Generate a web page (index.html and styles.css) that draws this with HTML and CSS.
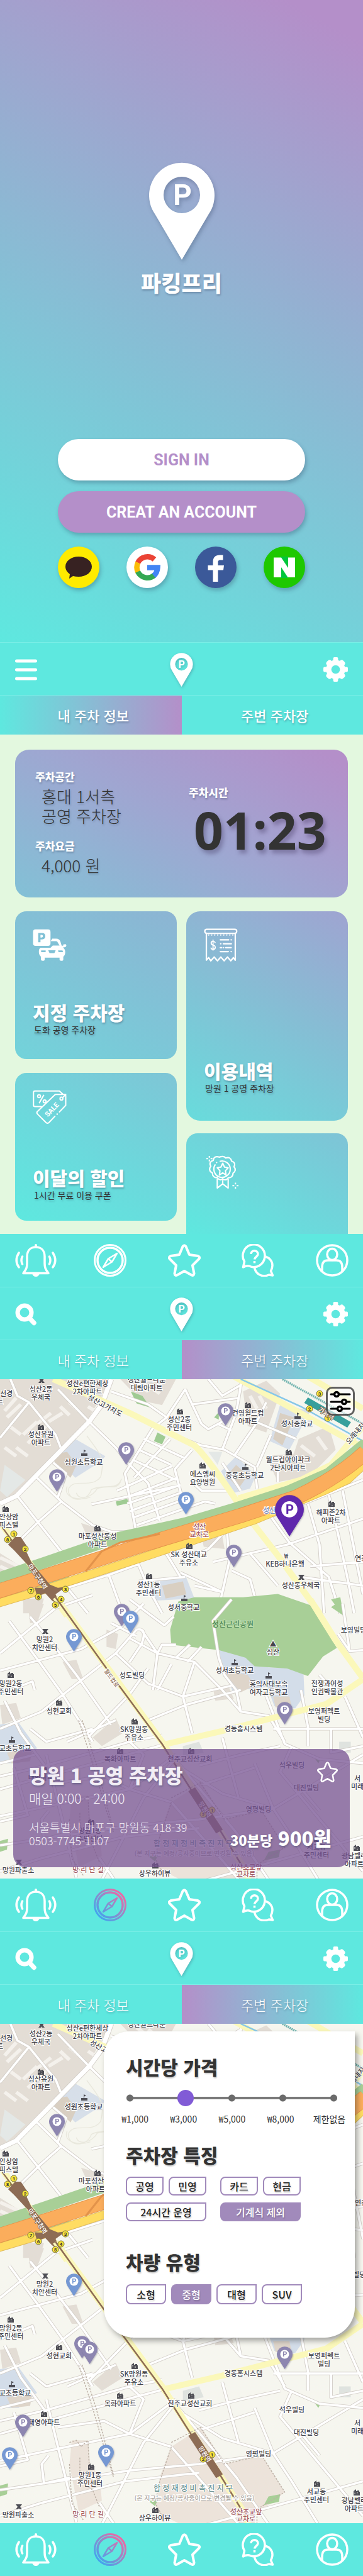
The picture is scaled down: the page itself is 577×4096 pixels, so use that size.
FILE: index.html
```html
<!DOCTYPE html>
<html lang="ko">
<head>
<meta charset="utf-8">
<meta name="viewport" content="width=device-width, initial-scale=1">
<title>파킹프리</title>
<link rel="stylesheet" href="styles.css">
</head>
<body>
<svg class="defs" aria-hidden="true">
  <defs>
    <linearGradient id="active" gradientUnits="userSpaceOnUse" x1="6" y1="46" x2="46" y2="6">
      <stop offset="0" stop-color="#3ba6f2"/><stop offset=".5" stop-color="#8e8bcb"/><stop offset="1" stop-color="#fb62a0"/>
    </linearGradient>
    <symbol id="logo" viewBox="0 0 104 155">
      <path fill="#fff" fill-rule="evenodd" d="M52 155 9 82A52 52 0 1 1 95 82ZM52 23a29 29 0 1 0 0 58a29 29 0 0 0 0-58Z"/>
      <text class="pin-p" fill="#fff" x="53" y="68">P</text>
    </symbol>
    <symbol id="pin" viewBox="0 0 104 150">
      <path fill="currentColor" d="M52 150 9 82A52 52 0 1 1 95 82Z"/>
      <circle cx="52" cy="52" r="29" fill="#fff"/>
      <text class="pin-p" fill="currentColor" x="53" y="68">P</text>
    </symbol>
    <symbol id="gear" viewBox="0 0 40 40">
      <g fill="#fff"><rect x="16" y="0" width="8" height="40" rx="2"/><rect x="16" y="0" width="8" height="40" rx="2" transform="rotate(90 20 20)"/><rect x="15" y="1" width="10" height="38" rx="4" transform="rotate(45 20 20)"/><rect x="15" y="1" width="10" height="38" rx="4" transform="rotate(-45 20 20)"/><circle cx="20" cy="20" r="15.500"/></g>
      <circle cx="20" cy="20" r="7" fill="#5ee8df"/>
    </symbol>
    <symbol id="search" viewBox="0 0 34 36">
      <circle cx="15" cy="15" r="11" fill="none" stroke="#fff" stroke-width="7"/>
      <path d="M23 24l7 7.500" stroke="#fff" stroke-width="7.500" stroke-linecap="round"/>
    </symbol>
    <symbol id="bell" viewBox="0 0 66 52">
      <g fill="none" stroke="currentColor" stroke-width="3.500" stroke-linecap="round" stroke-linejoin="round">
        <path d="M33 5c-9 0-14 6-14 15v11c0 6-1 9-6 15.500h40c-5-6.500-6-9.500-6-15.500V20c0-9-5-15-14-15Z"/>
        <path d="M6 14c-5 8-5 16 0 23M60 14c5 8 5 16 0 23M11.500 20c-2 4-2 8 0 12M54.500 20c2 4 2 8 0 12"/>
      </g>
      <path fill="currentColor" d="M31 6V2a2 2 0 0 1 4 0v4ZM27 47h12c-1 3-3 5-6 5s-5-2-6-5Z"/>
    </symbol>
    <symbol id="compass" viewBox="0 0 52 52">
      <g fill="none" stroke="currentColor" stroke-linejoin="round">
        <circle cx="26" cy="26" r="24.500" stroke-width="3"/><circle cx="26" cy="26" r="20" stroke-width="3.500"/>
        <path stroke-width="2.500" d="M37 15 23 23.500 15 37 29 28.500ZM23 23.500l6 5"/>
      </g>
    </symbol>
    <symbol id="compass-active" viewBox="0 0 52 52">
      <g fill="none" stroke="url(#active)" stroke-linejoin="round">
        <circle cx="26" cy="26" r="24.500" stroke-width="3"/><circle cx="26" cy="26" r="20" stroke-width="3.500"/>
        <path stroke-width="2.500" d="M37 15 23 23.500 15 37 29 28.500ZM23 23.500l6 5"/>
      </g>
    </symbol>
    <symbol id="star" viewBox="0 0 52 52">
      <path fill="none" stroke="currentColor" stroke-width="4" stroke-linejoin="round" d="M23.500 4Q26 .500 28.500 4L34 17 47.500 19Q52 21 49 24L39 34 41.500 47Q41 51 37.500 49.500L26 43 14.500 49.500Q11 51 10.500 47L13 34 3 24Q0 21 4.500 19L18 17Z"/>
    </symbol>
    <symbol id="chat" viewBox="0 0 52 52">
      <g fill="none" stroke="currentColor" stroke-width="3.500" stroke-linejoin="round">
        <path d="M2.500 37 4.500 28A17.500 18 0 1 1 12 35Q8 34 2.500 37Z"/>
        <path d="M38 20c6 2 11 7 11 14 0 4-1 6-2.500 9l3 7-6-1c-9 4-20 1-23-11"/>
        <path d="M15 16c0-7 11-7 11 0 0 4-5 4-5.500 8.500M20.500 27v3.500"/>
      </g>
    </symbol>
    <symbol id="person" viewBox="0 0 52 52">
      <g fill="none" stroke="currentColor" stroke-width="3.500">
        <circle cx="26" cy="26" r="24"/><ellipse cx="26" cy="16.500" rx="8" ry="9"/>
        <path d="M10 44V37c0-7 3-11 9-11h14c6 0 9 4 9 11v7"/>
      </g>
    </symbol>

    <path id="roads-north" d="M45 483 75 560 125 590 200 690 240 740 262 800M125 590 0 755M250 530 385 680 500 800 560 880 640 965 690 1140M75 1025 270 1290M160 940 265 1050 400 1160 480 1190 590 1190M265 1050 170 1140 75 1240M230 870 285 920 250 1030M395 1063 780 975M505 1000 745 885M560 1025 765 940M550 1060 775 975M560 1095 780 1010M575 1125 785 1045M590 1160 885 1050 930 1060M660 710 540 920 590 1200M735 760 580 940M620 760 800 850M600 810 740 880M830 810 755 900 800 1090M580 860 760 950M800 530 830 600 870 690 900 715 960 680M900 483 960 560 1040 510M1045 483 1020 640 960 810M830 600 1030 570M1060 660 1280 760M1150 590 1100 700 1010 840M740 740 870 790 970 810 1100 890 1110 990M1170 740 1110 890M940 690 1000 720M800 530 720 660 660 710M480 540 640 600 720 660M1100 1130 1170 1120 1568 950M1170 1120 1250 1240 1420 1400 1470 1568M1330 1060 1380 1250 1400 1568M1420 1020 1450 1150 1500 1400 1530 1568M1480 1000 1568 1480M1080 1290 1240 1250 1568 1130M1340 1350 1568 1330M1300 1400 1568 1440M980 1180 990 1330 940 1568M920 1330 1080 1290 1200 1440M800 1320 900 1270 980 1180M590 1320 640 1450 700 1568M290 1450 470 1390 600 1340M470 1390 530 1568M290 1450 380 1568M600 1420 800 1400M780 1380 960 1470 840 1440M1000 1370 1080 1410 1120 1568M130 1340 620 1200M700 1260 780 1400M620 1190 610 1250M840 970 870 1000 1000 1000M1200 910V960M1040 1000 960 870"/>
    <path id="avenue" d="M0 1060 70 1025 385 680 440 600 480 483"/>
    <path id="roads-south" d="M0 230 240 20 400-40M40 80 170 270 270 420 400 640M0 310 350 210 520 110 620 0M130 60 230 190 330 330 480 560M0 580 180 500 250 440 500 230 590 120M380 620 560 420 640 300M500 230 640 370 790 430 1000 380M560 160 680 230 840 270 960 400 1040 500M610 120 680 230 660 400M740 280 680 400M840 270 790 430 830 600M640 540 800 470 1040 400M590 120Q640 110 610 190L560 270M480 90 590 150M560-20 710 100 750 60M680 230 700 190 760 190M820 190 760 250M870 200 810 270M0 800 200 750 560 640 700 610M0 740 150 700M0 860 200 800 720 650M0 985 560 860 760 700M0 1120 560 1030 860 1000 1180 950 1568 700M740 740 620 900 540 1070 440 1280M200 700 330 1270M60 760 120 980 0 1010M1180 580H1568M1140 400 1230 650 1380 720 1568 740M1260 660 1210 780 1420 1050 1568 1240M860 1290 1100 1220 1568 1080M960 620 1030 900M780 760 960 880 1180 950M1300 400 1330 570 1330 660M1100 740 1180 950M1430 580V690L1568 660M860 750 1040 700 1210 660M870 840 1100 760M560 640 620 700 560 860 740 920M690 620 740 700 1020 1060 1160 1280M740 920 960 1190 1040 1290M1480 0 1510 220M1568 215 1510 220 1460 140M1180 950 1260 1080 1380 1290M0 1240 180 1180 540 1080 860 1040M560 860 450 800 250 830M290 640 500 540M130 580 200 640 400 580M430 1180 500 1290M210 960 180 1000 190 1090 310 1060M1310 870 1380 960M1490 430 1568 620M1380 330 1440 400M0 420 140 360 150 400M20 450 90 600 200 760"/>
    <path id="park-road" d="M1000-20 920 80 945 250 970 330 1020 400 1040 500 1160 520 1230 640"/>

    <symbol id="map" viewBox="0 0 577 794">
      <rect width="577" height="794" fill="#f6f6ef"/>
      <g transform="scale(.368 .343) translate(0 -483)">
        <path fill="#e3ddd5" d="M0 483H480L380 670 70 1010 0 1060ZM520 483h240l-60 120-90-20ZM1050 540l100-50 60 60-60 180-80-30ZM1290 760l130-60 30 110-110 120-90-40ZM1150 840l200-20 0 110-150 30ZM350 1150l90 30 40 60-100-20ZM870 1210h90l10 60-90-10ZM0 1290l120 80-60 60-60-10ZM100 1500h90l-20 68h-70Z"/>
        <path fill="#e4e8e6" d="M20 880l90 70-80 80-30-30ZM900 820l60 0-20 60Z"/>
        <path fill="#d7dfe9" d="M325 760l130 80-20 25-110 75-80-90ZM1210 600l130 30-90 180-85-40ZM1020 840l85 90-25 60-70 20-55-100ZM650 1430l150-40 40 110-180 10Z"/>
        <path fill="#d9cfc2" d="M240 830l50-10 40 60-25 60-70-70ZM1210 640l60 20-50 130-40-30ZM1020 880l50 50-40 60-50-60ZM700 1440l90-20 15 60-90 20Z"/>
        <path class="blocks" d="M20 630l50-60M30 660l60-60M100 740l60-60M120 780l80-80M160 690l60-50M210 680l60-40M260 610l40 40M300 590l40 40M160 560l60-30M70 800l50 40M20 800l50 40M40 700l50 40M590 500l50 40M640 510l50 40M1080 560l30 60M1120 560l30 60M1300 790l60 50M1370 750l40 60M0 1310l80 40M0 1350l60 30M380 610l30 20"/>
        <path class="contour" d="M375 745c60 90 80 100 60 190-40 60-120 0-140 60 0 60 80 60 100 0 50-30 110 10 130-50M330 1010c10 40 70 20 90-20 50-20 80 10 100-30M290 980c-20 50 50 70 100 50"/>
        <path fill="#9fcb93" d="M565 540l50 20 35 55-60-20ZM680 730l35 20-15 35-35-15ZM925 660l20-25 0 35ZM500 1050l50-12 5 20-50 12Z"/>
        <use href="#roads-north" class="road-case"/>
        <use href="#avenue" class="road-case avenue-case"/>
        <use href="#roads-north" class="road-fill"/>
        <use href="#avenue" class="road-fill avenue-fill"/>
        <path class="yellow" d="M230 483 560 640 840 790Q900 850 1030 1060"/>
        <path class="yellow" d="M1030 1035 1300 950 1430 880Q1500 790 1568 700M1070 1120 1200 1300 1380 1568M1010 470 1568 800M1330 470 1568 620"/>
        <path d="M1040 483 1300 610 1568 770" fill="none" stroke="#86c7e8" stroke-width="7"/>
        <path d="M1220 483 1568 690" fill="none" stroke="#6fb2ae" stroke-width="10" stroke-dasharray="6 3"/>
        <path d="M1322 580 1508 695" fill="none" stroke="#379f9c" stroke-width="30"/>
        <path d="M-20 1410 200 1330 500 1220 800 1150 1020 1080 1250 1000 1420 920 1580 780M150 1450 300 1400M-20 1510 100 1480" fill="none" stroke="#a8cf97" stroke-width="52"/>
        <path d="M-20 1525 200 1455 600 1315 1100 1135 1400 1000 1500 950 1580 870" fill="none" stroke="#dfb95a" stroke-width="40"/>
        <path d="M-20 1525 200 1455 600 1315 1100 1135 1400 1000 1500 950 1580 870" fill="none" stroke="#ffdc62" stroke-width="35"/>
        <path d="M-20 1470 200 1395 620 1250 1040 1115 1280 1030Q1460 940 1580 820" fill="none" stroke="#e3934a" stroke-width="69"/>
        <path d="M-20 1470 200 1395 620 1250 1040 1115 1280 1030Q1460 940 1580 820" fill="none" stroke="#fbad5c" stroke-width="64"/>
        <path d="M370 1375 440 1280 520 1240 690 1200" fill="none" stroke="#e3934a" stroke-width="9"/>
        <path class="yellow" d="M10 1160 290 1580"/>
        <path d="M10 1170 290 1580" fill="none" stroke="#8d6c55" stroke-width="6"/>
        <path fill="#8d6c55" d="M35 1250 65 1215 90 1215 118 1260 115 1285 135 1330 215 1435 250 1450 285 1445 240 1480 260 1530 225 1510 195 1475 160 1490 150 1450 185 1450 125 1350 60 1275Z"/>
        <path fill="#a8cf97" d="M1430 1540l40-30 15 70Z"/>
      </g>
      <g transform="translate(0 357) scale(.368 .343)">
        <path fill="#e3ddd5" d="M120 0h70l-30 90h-30ZM270 270l60-10 30 90-50 0ZM0 470l70-10 20 70-80 30ZM460 120l50 20-10 70-40-10ZM400 620l100-90 30 70-90 60ZM920 390l70 0 20 50-80 10Z"/>
        <path fill="#ece3da" d="M740 920 870 830 970 1000 1130 960 1230 1130 1100 1240V1290H800L670 1220 690 1060ZM310 890h70l10 110 40 60 10 110-100 50-40-220Z"/>
        <path fill="#d3dde9" d="M950 215l80 0 130 80 150 0 5 130-40 60-90-10-30-90-150 20-60-150ZM0 560l80-10 80 120-80 70H0Z"/>
        <path fill="#ded5ca" d="M960 310l110 20 30 50-60 30ZM30 690l110-20-10 60-80 10ZM1180 430l70 0 10 50-70 0Z"/>
        <path fill="#dfe3df" d="M1465 640h50v50h-50ZM790 660l70-20 20 50-90 20Z"/>
        <path fill="#a8cf97" d="M770-10 840-30 1050-30 1200-45 1350 10 1455 205 1395 245 1330 335 1240 300 1100 290 1060 250 945 215 740 190 735 120ZM1430-20l40-10 15 90ZM0 1100l35-10-5 50-30 10ZM1140 1190l20-40 50-10-5 35ZM1355 710l30 10-10 20ZM640 1170l40 0-10 25Z"/>
        <use href="#roads-south" class="road-case"/>
        <use href="#park-road" class="road-case"/>
        <use href="#roads-south" class="road-fill"/>
        <use href="#park-road" class="road-fill"/>
        <path class="yellow" d="M1340-20 1450 170 1568 345M1568 350 1410 465 960 590 700 655M240-30 700 640 1070 1250V1290"/>
        <path d="M240-30 480 330 700 650 830 870M950 1050 1060 1240" fill="none" stroke="#8d6c55" stroke-width="7"/>
        <path d="M828 860 948 1056" fill="none" stroke="#8d6c55" stroke-width="34"/>
        <path class="dash" d="M340 540 400 740 460 960 490 1060M355 540 415 740 490 1050M300 900 330 890 350 920 380 890 385 1000M345 970 345 1080 400 1120 430 1200M300 1000 310 1180 360 1260M740 900 865 830 970 1000 1130 960 1230 1130 1110 1210V1290M740 920 690 1080 670 1180 700 1240"/>
      </g>
    </symbol>

    <path id="poi-home" fill="#4e4e55" d="M0 10V3l4-3v3h2V2h3v2h1v6ZM1.500 4v1h1V4Zm0 2v1h1V6Zm4-1v1h1V5Zm0 2v1h1V7Z"/>
    <path id="poi-flag" fill="#4e4e55" d="M0 10V6h4V0l4 2-3 1.500V6h5v4Z"/>
    <path id="poi-post" fill="#4e4e55" d="M0 1h10L7 5l3 4H6L5 7 4 9H0l3-4Z"/>
    <circle id="exit" cx="5" cy="5" r="5" fill="#f7e53b" stroke="#77703a"/>
  </defs>
</svg>

<section class="hero">
  <svg class="hero-logo" aria-hidden="true"><use href="#logo"/></svg>
  <h1 class="hero-name">파킹프리</h1>
  <div class="hero-actions">
    <button class="pill pill-light" type="button">SIGN IN</button>
    <button class="pill pill-purple" type="button">CREAT AN ACCOUNT</button>
    <div class="socials">
      <button class="social kakao" type="button" aria-label="Kakao"><svg viewBox="0 0 66 66"><path fill="#372222" d="M33 16c12 0 21 7 21 16s-9 16-21 16q-5 0-9-1l-6 4 1-7c-4-3-7-7-7-12 0-9 9-16 21-16Z"/></svg></button>
      <button class="social google" type="button" aria-label="Google"><svg viewBox="0 0 66 66"><g fill="none" stroke-width="8.500"><path stroke="#eb4335" d="M44.500 20.500A17 17 0 0 0 18 26"/><path stroke="#fbbc05" d="M18.300 25.500A17 17 0 0 0 18.300 40.500"/><path stroke="#34a853" d="M18 40A17 17 0 0 0 44.500 45.500"/><path stroke="#4285f4" d="M43.500 46.500Q49 41.500 49.500 33.500H33"/></g></svg></button>
      <button class="social facebook" type="button" aria-label="Facebook"><svg viewBox="0 0 66 66"><path fill="#fff" d="M28.500 56V37.500h-8V30h8v-5c0-8 4-11.500 11-11.500h5v8h-4c-3 0-4 1-4 4V30H46l-1 7.500h-8.500V56Z"/></svg></button>
      <button class="social naver" type="button" aria-label="Naver"><svg viewBox="0 0 66 66"><path fill="#00c73c" d="M27 16h12v34H27Z"/><path fill="#fff" d="M16 17.500h12L39 34V17.500h11V49H38.500L28 33v16H16Z"/></svg></button>
    </div>
  </div>
</section>

<section class="screen">
  <header class="topbar">
    <button class="icon-btn" type="button" aria-label="메뉴"><svg width="35" height="34" viewBox="0 0 35 34"><path d="M2.500 3h30M2.500 17h30M2.500 31h30" stroke="#fff" stroke-width="5" stroke-linecap="round"/></svg></button>
    <svg class="topbar-logo" aria-hidden="true"><use href="#logo"/></svg>
    <button class="icon-btn end" type="button" aria-label="설정"><svg width="39" height="39"><use href="#gear"/></svg></button>
  </header>
  <nav class="tabs tabs-strong">
    <a class="tab tab-active-left" href="#info">내 주차 정보</a>
    <a class="tab" href="#nearby">주변 주차장</a>
  </nav>
  <main class="dashboard" id="info">
    <article class="card card-summary">
      <div class="summary-place">
        <h2 class="label">주차공간</h2>
        <p class="value">홍대 1서측<br>공영 주차장</p>
        <h2 class="label label-fee">주차요금</h2>
        <p class="value">4,000 원</p>
      </div>
      <div class="summary-time">
        <h2 class="label">주차시간</h2>
        <p class="clock">01:23</p>
      </div>
    </article>
    <div class="columns">
      <div class="column">
        <article class="card tile tile-spot">
          <svg class="tile-icon" viewBox="34 38 210 200"><g fill="#fff"><path fill-rule="evenodd" d="M52 40h76a16 16 0 0 1 16 16v70a16 16 0 0 1-16 16H52a16 16 0 0 1-16-16V56a16 16 0 0 1 16-16ZM68 62v58h14v-18h10q20 0 20-20t-20-20ZM82 74h8q7 0 7 8t-7 8h-8Z"/><path d="M155 97h24q20 0 26 18l8 26h9l2-9h16l2 9q-1 9-12 10l-9 1q14 10 14 30-1 20-12 27v19q-2 6-11 6t-12-6v-13h-92v13q-2 6-11 6t-12-6v-19q-13-12-13-30 0-20 10-25h62l14-14h42l-9-15q-4-12-12-12h-34Z"/></g><path fill="#80c1d6" d="M86 170h28v11H86ZM190 170h28l4 11h-28ZM130 169h46l-8 18h-30Z"/></svg>
          <h3 class="tile-title">지정 주차장</h3>
          <p class="tile-sub">도화 공영 주차장</p>
        </article>
        <article class="card tile tile-sale">
          <svg class="tile-icon" viewBox="28 24 214 214"><g fill="none" stroke="#fff" stroke-width="8" stroke-linecap="round" stroke-linejoin="round"><path d="M82 129H42q-9 0-9-9V40q0-9 9-9h154l22 20M170 53h58q8 0 8 8v60l-40 42M168 190l-38 40q-9 8-18 0l-54-54q-8-8 0-16L170 53M236 53l-20 20M97 58 70 105"/><circle cx="68" cy="64" r="9"/><circle cx="103" cy="96" r="9"/><circle cx="209" cy="79" r="9"/></g><circle cx="182" cy="177" r="5" fill="#fff"/><text class="sale-word" x="147" y="164" transform="rotate(-46 147 147)">SALE</text></svg>
          <h3 class="tile-title">이달의 할인</h3>
          <p class="tile-sub">1시간 무료 이용 쿠폰</p>
        </article>
      </div>
      <div class="column column-tight">
        <article class="card tile tile-history">
          <svg class="tile-icon" viewBox="34 32 214 212"><g fill="none" stroke="#fff" stroke-width="9" stroke-linecap="round" stroke-linejoin="round"><rect x="40" y="37" width="201" height="26" rx="12"/><path d="M50 62V232L64 216 78 236 99 212 120 236 141 212 162 236 183 212 204 236 220 216 232 232V62"/><path d="M138 104h52M206 104h1M140 129h1M157 129h50M138 153h8M157 153h1M172 153h34M138 178h50M206 178h1"/><path stroke-width="7" d="M105 121q-4-8-13-8-12 0-12 11t13 13q13 3 13 15t-14 12q-10 0-13-9M92 105v64"/></g><path d="M64 74h158" stroke="#fff" stroke-width="8" stroke-linecap="round" stroke-dasharray="1 18"/></svg>
          <h3 class="tile-title">이용내역</h3>
          <p class="tile-sub">망원 1 공영 주차장</p>
        </article>
        <article class="card tile tile-badge">
          <svg class="tile-icon" viewBox="0 0 54 56"><g fill="none" stroke="#fff" stroke-width="2.200" stroke-linejoin="round"><path d="M27 2q3 0 5 2.500 4-1.500 6.500 0t3 5q4 1 5 4t-1 5.500q3 3 2 6t-3.500 4.500q0 4-2.500 6t-5.500 1.500q-2 3.500-5 3.500t-4-2q-2 2.500-5 1.500t-4-3q-4 0-6-2t-2-6q-4-1.500-4.500-5t2-6q-2.500-3-1-6t5-3.500q0-4 3-5.500t6.500 0Q24 2 27 2Z"/><path d="M22 10a13.500 13.500 0 1 1-7 5M18 39v15l9-7 9 7V39M27 41v6M27 13l3 6.500 6 1-4.500 5 1 7L27 29l-5.500 3.500 1-7-4.500-5 6-1Z"/><path d="M5 1v3M5 7v3M0 5.500h3M7 5.500h3M48 45v3M48 52v3M43 50h3M50 50h3"/></g><circle cx="17" cy="12" r="1.200" fill="#fff"/></svg>
        </article>
      </div>
    </div>
  </main>
  <nav class="bottombar" aria-label="하단 메뉴">
    <a href="#alarm" aria-label="알림"><svg class="wide"><use href="#bell"/></svg></a>
    <a href="#nearby" aria-label="지도"><svg><use href="#compass"/></svg></a>
    <a href="#favorite" aria-label="즐겨찾기"><svg><use href="#star"/></svg></a>
    <a href="#help" aria-label="문의"><svg><use href="#chat"/></svg></a>
    <a href="#me" aria-label="내 정보"><svg><use href="#person"/></svg></a>
  </nav>
</section>

<section class="screen" id="nearby">
  <header class="topbar">
    <button class="icon-btn" type="button" aria-label="검색"><svg width="34" height="36"><use href="#search"/></svg></button>
    <svg class="topbar-logo" aria-hidden="true"><use href="#logo"/></svg>
    <button class="icon-btn end" type="button" aria-label="설정"><svg width="39" height="39"><use href="#gear"/></svg></button>
  </header>
  <nav class="tabs">
    <a class="tab" href="#info">내 주차 정보</a>
    <a class="tab tab-active-right" href="#nearby">주변 주차장</a>
  </nav>
  <main class="map-view">
    <svg class="map" viewBox="0 0 577 794">
      <use href="#map"/>
      <g class="pois">
        <use href="#poi-post" x="61" y="-3"/><use href="#poi-home" x="60" y="71"/><use href="#poi-flag" x="129" y="112"/><use href="#poi-home" x="281" y="46"/><use href="#poi-home" x="389" y="36"/><use href="#poi-flag" x="468" y="53"/><use href="#poi-home" x="317" y="132"/><use href="#poi-flag" x="385" y="134"/><use href="#poi-home" x="454" y="111"/><use href="#poi-home" x="4" y="201"/><use href="#poi-home" x="150" y="232"/><use href="#poi-home" x="296" y="260"/><use href="#poi-home" x="522" y="193"/><use href="#poi-post" x="474" y="310"/><use href="#poi-home" x="232" y="308"/><use href="#poi-flag" x="288" y="343"/><use href="#poi-post" x="67" y="396"/><use href="#poi-flag" x="368" y="445"/><use href="#poi-flag" x="422" y="466"/><use href="#poi-home" x="12" y="465"/><use href="#poi-home" x="89" y="509"/><use href="#poi-home" x="209" y="539"/><use href="#poi-flag" x="14" y="568"/><use href="#poi-home" x="186" y="586"/><use href="#poi-home" x="299" y="586"/><use href="#poi-home" x="65" y="615"/><use href="#poi-home" x="140" y="699"/><use href="#poi-post" x="25" y="763"/><use href="#poi-home" x="242" y="768"/><use href="#poi-home" x="499" y="726"/><use href="#poi-home" x="562" y="740"/>
      </g>
      <g class="exits">
        <use href="#exit" x="17" y="241"/><use href="#exit" x="7" y="250"/><use href="#exit" x="35" y="265"/><use href="#exit" x="44" y="331"/><use href="#exit" x="56" y="341"/><use href="#exit" x="99" y="329"/><use href="#exit" x="92" y="345"/><use href="#exit" x="83" y="354"/><use href="#exit" x="503" y="18"/><use href="#exit" x="487" y="42"/><use href="#exit" x="516" y="57"/><use href="#exit" x="332" y="680"/><use href="#exit" x="318" y="687"/>
        <text x="22" y="249">1</text><text x="12" y="258">8</text><text x="40" y="273">2</text><text x="49" y="339">7</text><text x="61" y="349">6</text><text x="104" y="337">3</text><text x="97" y="353">4</text><text x="88" y="362">5</text><text x="508" y="26">3</text><text x="492" y="50">2</text><text x="521" y="65">1</text><text x="337" y="688">1</text><text x="323" y="695">2</text>
      </g>
      <g class="labels">
        <text x="10" y="27">선경</text><text x="0" y="40">트</text>
        <text x="65" y="20">성산2동<tspan x="65" dy="13">우체국</tspan></text>
        <text x="139" y="11">성산e편한세상<tspan x="139" dy="13">2차아파트</tspan></text>
        <text x="233" y="5">성산월드타운<tspan x="233" dy="13">대림아파트</tspan></text>
        <text x="167" y="46" transform="rotate(28 167 42)">성산고가차도</text>
        <text x="285" y="68">성산2동<tspan x="285" dy="13">주민센터</tspan></text>
        <text x="394" y="58">건영월드컵<tspan x="394" dy="13">아파트</tspan></text>
        <text x="472" y="75">성사중학교</text>
        <text x="65" y="92">성산유원<tspan x="65" dy="13">아파트</tspan></text>
        <text x="133" y="136">성원초등학교</text>
        <text x="322" y="155">에스엠씨<tspan x="322" dy="13">요양병원</tspan></text>
        <text x="389" y="157">중동초등학교</text>
        <text x="458" y="132">월드컵아이파크<tspan x="458" dy="13">2단지아파트</tspan></text>
        <text x="565" y="90" transform="rotate(-50 565 86)">오래내지</text>
        <text x="14" y="223">안상암<tspan x="14" dy="13">피스텔</tspan></text>
        <text x="155" y="254">마포성산동성<tspan x="155" dy="13">아파트</tspan></text>
        <text class="crossing" x="317" y="239">성산<tspan x="317" dy="12">교차로</tspan></text>
        <text class="water" x="428" y="213">성산</text>
        <text x="526" y="216">해피존2차<tspan x="526" dy="13">아파트</tspan></text>
        <text x="300" y="283">SK 성산대교<tspan x="300" dy="13">주유소</tspan></text>
        <text x="455" y="285">₩</text><text x="453" y="298">KEB하나은행</text>
        <text x="478" y="332">성산동우체국</text>
        <text x="574" y="289">연경</text>
        <text x="236" y="331">성산1동<tspan x="236" dy="13">주민센터</tspan></text>
        <text x="292" y="367">성서중학교</text>
        <text class="station" x="61" y="318" transform="rotate(56 61 313)">마포구청역</text>
        <text class="station" x="519" y="58" transform="rotate(32 519 54)">가좌역</text>
        <text class="park" x="370" y="394">성산근린공원</text>
        <text x="562" y="403">보영빌딩</text>
        <text x="71" y="418">망원2<tspan x="71" dy="13">치안센터</tspan></text>
        <text x="434" y="425">▲</text><text x="434" y="438">성산</text>
        <text x="373" y="467">성서초등학교</text>
        <text class="rail" x="178" y="479" transform="rotate(55 178 475)">월드컵로</text>
        <text x="210" y="475">성도빌딩</text>
        <text x="427" y="489">홍익사대부속<tspan x="427" dy="13">여자고등학교</tspan></text>
        <text x="520" y="488">전쟁과여성<tspan x="520" dy="13">인권박물관</tspan></text>
        <text x="17" y="488">망원2동<tspan x="17" dy="13">주민센터</tspan></text>
        <text x="94" y="532">성현교회</text>
        <text x="515" y="532">보영퍼펙트<tspan x="515" dy="13">빌딩</tspan></text>
        <text x="213" y="561">SK망원동<tspan x="213" dy="13">주유소</tspan></text>
        <text x="387" y="560">경동홈시스템</text>
        <text x="24" y="591">교초등학교</text>
        <text x="191" y="608">목화아파트</text>
        <text x="302" y="608">천주교성산교회</text>
        <text x="464" y="618">석우빌딩</text>
        <text x="70" y="638">태영아파트</text>
        <text x="487" y="654">대진빌딩</text>
        <text x="568" y="639">서<tspan x="568" dy="13">미래</tspan></text>
        <text class="station" x="326" y="688" transform="rotate(57 326 684)">망원역</text>
        <text x="411" y="688">영평빌딩</text>
        <text x="143" y="722">망원1동<tspan x="143" dy="13">주민센터</tspan></text>
        <text class="zone" x="307" y="743">합 정 재 정 비 촉 진 지 구</text>
        <text class="zone-note" x="309" y="758">(본 지구는 예정/공사중이므로 변경될 수 있음)</text>
        <text x="503" y="748">서교동<tspan x="503" dy="13">주민센터</tspan></text>
        <text x="563" y="762">광남벨라<tspan x="563" dy="13">아파트</tspan></text>
        <text x="29" y="785">망원파출소</text>
        <text class="crossing" x="140" y="784">망 리 단 길</text>
        <text x="246" y="790">상우하이뷰</text>
        <text class="crossing" x="391" y="780">성산초교앞<tspan x="391" dy="11">교차로</tspan></text>
      </g>
      <g class="pins">
        <use href="#pin" x="346" y="38" width="25" height="36"/><use href="#pin" x="188" y="100" width="25" height="36"/><use href="#pin" x="78" y="143" width="25" height="36"/><use class="blue" href="#pin" x="283" y="179" width="25" height="36"/><use href="#pin" x="359" y="263" width="25" height="36"/><use href="#pin" x="181" y="357" width="25" height="36"/><use class="blue" href="#pin" x="195" y="368" width="25" height="36"/><use class="blue" href="#pin" x="105" y="397" width="25" height="36"/><use href="#pin" x="440" y="513" width="25" height="36"/><use class="chosen" href="#pin" x="437" y="184" width="46" height="66"/>
      </g>
    </svg>
    <button class="filter-btn" type="button" aria-label="필터"><svg viewBox="0 0 40 40"><path d="M5 9h30M5 21h30M5 32h30" stroke="#000" stroke-width="3" stroke-linecap="round"/><g fill="#fff" stroke="#000" stroke-width="3.500"><circle cx="14" cy="9" r="3.500"/><circle cx="26" cy="21" r="3.500"/><circle cx="19" cy="32" r="3.500"/></g></svg></button>
    <article class="spot">
      <div class="spot-info">
        <h2 class="spot-name">망원 1 공영 주차장</h2>
        <p class="spot-hours">매일 0:00 - 24:00</p>
        <p class="spot-address">서울특별시 마포구 망원동 418-39<br>0503-7745-1107</p>
      </div>
      <div class="spot-side">
        <button class="icon-btn" type="button" aria-label="즐겨찾기 추가"><svg width="33" height="33"><use href="#star"/></svg></button>
        <p class="spot-price"><span class="spot-unit">30분당</span> 900원</p>
      </div>
    </article>
  </main>
  <nav class="bottombar" aria-label="하단 메뉴">
    <a href="#alarm" aria-label="알림"><svg class="wide"><use href="#bell"/></svg></a>
    <a href="#nearby" aria-label="지도"><svg><use href="#compass-active"/></svg></a>
    <a href="#favorite" aria-label="즐겨찾기"><svg><use href="#star"/></svg></a>
    <a href="#help" aria-label="문의"><svg><use href="#chat"/></svg></a>
    <a href="#me" aria-label="내 정보"><svg><use href="#person"/></svg></a>
  </nav>
</section>

<section class="screen">
  <header class="topbar">
    <button class="icon-btn" type="button" aria-label="검색"><svg width="34" height="36"><use href="#search"/></svg></button>
    <svg class="topbar-logo" aria-hidden="true"><use href="#logo"/></svg>
    <button class="icon-btn end" type="button" aria-label="설정"><svg width="39" height="39"><use href="#gear"/></svg></button>
  </header>
  <nav class="tabs">
    <a class="tab" href="#info">내 주차 정보</a>
    <a class="tab tab-active-right" href="#nearby">주변 주차장</a>
  </nav>
  <main class="map-view">
    <svg class="map" viewBox="0 0 577 794">
      <use href="#map"/>
      <g class="pois">
        <use href="#poi-post" x="61" y="-3"/><use href="#poi-home" x="60" y="71"/><use href="#poi-flag" x="129" y="112"/><use href="#poi-home" x="4" y="201"/><use href="#poi-home" x="150" y="232"/><use href="#poi-post" x="67" y="396"/><use href="#poi-home" x="12" y="465"/><use href="#poi-home" x="89" y="509"/><use href="#poi-home" x="209" y="539"/><use href="#poi-flag" x="14" y="568"/><use href="#poi-home" x="186" y="586"/><use href="#poi-home" x="299" y="586"/><use href="#poi-home" x="65" y="615"/><use href="#poi-home" x="140" y="699"/><use href="#poi-post" x="25" y="763"/><use href="#poi-home" x="242" y="768"/><use href="#poi-home" x="499" y="726"/><use href="#poi-home" x="562" y="740"/>
      </g>
      <g class="exits">
        <use href="#exit" x="17" y="241"/><use href="#exit" x="7" y="250"/><use href="#exit" x="35" y="265"/><use href="#exit" x="44" y="331"/><use href="#exit" x="56" y="341"/><use href="#exit" x="99" y="329"/><use href="#exit" x="92" y="345"/><use href="#exit" x="83" y="354"/><use href="#exit" x="332" y="680"/><use href="#exit" x="318" y="687"/>
        <text x="22" y="249">1</text><text x="12" y="258">8</text><text x="40" y="273">2</text><text x="49" y="339">7</text><text x="61" y="349">6</text><text x="104" y="337">3</text><text x="97" y="353">4</text><text x="88" y="362">5</text><text x="337" y="688">1</text><text x="323" y="695">2</text>
      </g>
      <g class="labels">
        <text x="10" y="27">선경</text><text x="0" y="40">트</text>
        <text x="65" y="20">성산2동<tspan x="65" dy="13">우체국</tspan></text>
        <text x="139" y="11">성산e편한세상<tspan x="139" dy="13">2차아파트</tspan></text>
        <text x="233" y="5">성산월드타운</text>
        <text x="157" y="40" transform="rotate(28 157 36)">성산고</text>
        <text x="65" y="92">성산유원<tspan x="65" dy="13">아파트</tspan></text>
        <text x="133" y="136">성원초등학교</text>
        <text x="565" y="90" transform="rotate(-50 565 86)">오래내지</text>
        <text x="14" y="223">안상암<tspan x="14" dy="13">피스텔</tspan></text>
        <text x="145" y="254">마포성산<tspan x="152" dy="13">아파트</tspan></text>
        <text x="574" y="289">연경</text>
        <text class="station" x="61" y="318" transform="rotate(56 61 313)">마포구청역</text>
        <text x="571" y="403">빌딩</text>
        <text x="71" y="418">망원2<tspan x="71" dy="13">치안센터</tspan></text>
        <text x="17" y="488">망원2동<tspan x="17" dy="13">주민센터</tspan></text>
        <text x="94" y="532">성현교회</text>
        <text x="515" y="532">보영퍼펙트<tspan x="515" dy="13">빌딩</tspan></text>
        <text x="213" y="561">SK망원동<tspan x="213" dy="13">주유소</tspan></text>
        <text x="387" y="560">경동홈시스템</text>
        <text x="24" y="591">교초등학교</text>
        <text x="191" y="608">목화아파트</text>
        <text x="302" y="608">천주교성산교회</text>
        <text x="464" y="618">석우빌딩</text>
        <text x="70" y="638">태영아파트</text>
        <text x="487" y="654">대진빌딩</text>
        <text x="568" y="639">서<tspan x="568" dy="13">미래</tspan></text>
        <text class="station" x="326" y="688" transform="rotate(57 326 684)">망원역</text>
        <text x="411" y="688">영평빌딩</text>
        <text x="143" y="722">망원1동<tspan x="143" dy="13">주민센터</tspan></text>
        <text class="zone" x="307" y="743">합 정 재 정 비 촉 진 지 구</text>
        <text class="zone-note" x="309" y="758">(본 지구는 예정/공사중이므로 변경될 수 있음)</text>
        <text x="503" y="748">서교동<tspan x="503" dy="13">주민센터</tspan></text>
        <text x="563" y="762">광남벨라<tspan x="563" dy="13">아파트</tspan></text>
        <text x="29" y="785">망원파출소</text>
        <text class="crossing" x="140" y="784">망 리 단 길</text>
        <text x="246" y="790">상우하이뷰</text>
        <text class="crossing" x="391" y="780">성산초교앞<tspan x="391" dy="11">교차로</tspan></text>
      </g>
      <g class="pins">
        <use href="#pin" x="78" y="143" width="25" height="36"/><use class="blue" href="#pin" x="105" y="397" width="25" height="36"/><use href="#pin" x="118" y="496" width="25" height="36"/><use href="#pin" x="130" y="505" width="25" height="36"/><use href="#pin" x="24" y="621" width="25" height="36"/><use class="blue" href="#pin" x="3" y="673" width="25" height="36"/><use class="blue" href="#pin" x="156" y="669" width="25" height="36"/><use href="#pin" x="440" y="513" width="25" height="36"/>
      </g>
    </svg>
    <form class="panel">
      <h2 class="panel-title"><label for="price">시간당 가격</label></h2>
      <input class="price-range" id="price" type="range" min="0" max="4" step="any" value="1.09">
      <ul class="price-labels"><li>₩1,000</li><li>₩3,000</li><li>₩5,000</li><li>₩8,000</li><li>제한없음</li></ul>
      <h2 class="panel-title">주차장 특징</h2>
      <div class="features">
        <div class="pair"><button class="chip" type="button">공영</button><button class="chip" type="button">민영</button></div>
        <div class="pair"><button class="chip" type="button">카드</button><button class="chip" type="button">현금</button></div>
        <button class="chip" type="button">24시간 운영</button>
        <button class="chip chip-on" type="button" aria-pressed="true">기계식 제외</button>
      </div>
      <h2 class="panel-title">차량 유형</h2>
      <div class="types">
        <button class="chip" type="button">소형</button><button class="chip chip-on" type="button" aria-pressed="true">중형</button><button class="chip" type="button">대형</button><button class="chip" type="button">SUV</button>
      </div>
    </form>
  </main>
  <nav class="bottombar" aria-label="하단 메뉴">
    <a href="#alarm" aria-label="알림"><svg class="wide"><use href="#bell"/></svg></a>
    <a href="#nearby" aria-label="지도"><svg><use href="#compass-active"/></svg></a>
    <a href="#favorite" aria-label="즐겨찾기"><svg><use href="#star"/></svg></a>
    <a href="#help" aria-label="문의"><svg><use href="#chat"/></svg></a>
    <a href="#me" aria-label="내 정보"><svg><use href="#person"/></svg></a>
  </nav>
</section>
</body>
</html>
```

FILE: styles.css
```css
:root {
  --mint: #5ee8df;
  --purple: #b48fc9;
  --ink: #333;
  --shadow: 2px 4px 6px rgba(40, 60, 90, .3);
  --text-shadow: 1px 2px 3px rgba(40, 60, 90, .35);
}

* { box-sizing: border-box; }

body, h1, h2, h3, p, ul { margin: 0; padding: 0; }

body {
  font-family: "Noto Sans CJK KR", "Noto Sans", sans-serif;
  color: var(--ink);
  background: var(--mint);
}

button { font: inherit; border: 0; padding: 0; background: none; color: inherit; cursor: pointer; }
a { color: inherit; text-decoration: none; }
ul { list-style: none; }
svg { display: block; }
.defs { position: absolute; width: 0; height: 0; }
.pin-p { font: 700 46px Roboto, sans-serif; text-anchor: middle; }

/* Welcome */
.hero {
  display: flex;
  flex-direction: column;
  align-items: center;
  min-height: 1021px;
  padding: 258px 92px 86px;
  background: linear-gradient(209deg, var(--purple) 5%, var(--mint) 100%);
}
.hero-logo { width: 104px; height: 155px; filter: drop-shadow(2px 4px 3px rgba(40, 60, 90, .3)); }
.hero-name {
  margin-top: 16px;
  font-size: 35px;
  line-height: 40px;
  font-weight: 900;
  color: #fff;
  text-shadow: var(--text-shadow);
}
.hero-actions { display: flex; flex-direction: column; gap: 17px; width: 100%; margin-top: auto; }
.pill {
  height: 66px;
  border-radius: 33px;
  font: 700 25px Roboto, sans-serif;
  box-shadow: var(--shadow);
}
.pill-light { background: #fff; color: var(--purple); }
.pill-purple { background: var(--purple); color: #fff; }
.socials { display: flex; justify-content: space-between; margin-top: 5px; }
.social { width: 66px; height: 66px; border-radius: 50%; overflow: hidden; box-shadow: var(--shadow); }
.kakao { background: #ffeb00; }
.google { background: #fff; }
.facebook { background: #3b5999; }
.naver { background: #1ec800; }

/* Header and tabs */
.topbar {
  display: grid;
  grid-template-columns: 1fr auto 1fr;
  align-items: center;
  height: 84px;
  padding: 2px 24px 0;
  background: var(--mint);
  border-top: 1px solid #7aeee6;
}
.topbar-logo { width: 37px; height: 54px; filter: drop-shadow(1px 2px 2px rgba(40, 60, 90, .3)); }
.icon-btn { justify-self: start; }
.end { justify-self: end; }
.tabs { display: grid; grid-template-columns: 1fr 1fr; height: 63px; border-top: 1px solid #7aeee6; }
.tab {
  display: flex;
  align-items: center;
  justify-content: center;
  padding-left: 8px;
  font-size: 22px;
  line-height: 32px;
  font-weight: 300;
  color: #fff;
  text-shadow: var(--text-shadow);
}
.tabs-strong .tab { font-weight: 500; }
.tab-active-left { background: linear-gradient(90deg, var(--mint), var(--purple)); }
.tab-active-right { background: linear-gradient(90deg, var(--purple), var(--mint)); }

/* Dashboard */
.dashboard {
  display: flex;
  flex-direction: column;
  gap: 22px;
  height: 794px;
  padding: 24px 24px 0;
  overflow: hidden;
  background: #e3f8df;
}
.card { flex: none; border-radius: 22px; }
.card-summary {
  display: grid;
  grid-template-columns: 244px 1fr;
  min-height: 235px;
  padding: 32px 20px 28px 32px;
  background: linear-gradient(209deg, #b48fc9 5%, #9fa6d1 50%, #82c1d6);
}
.label { font-size: 17px; line-height: 22px; font-weight: 900; color: #fff; text-shadow: var(--text-shadow); }
.label-fee { margin-top: 22px; }
.value { margin: 4px 0 0 10px; font-size: 26px; line-height: 31px; font-weight: 300; text-shadow: 1px 2px 3px rgba(40, 60, 90, .25); }
.summary-time { padding-top: 25px; }
.clock {
  margin: 2px 0 0 8px;
  font: 700 82px "Noto Sans", sans-serif;
  line-height: 92px;
  text-shadow: 4px 6px 6px rgba(60, 50, 90, .35);
}
.columns { display: grid; grid-template-columns: 1fr 1fr; gap: 15px; }
.column { display: flex; flex-direction: column; gap: 22px; }
.column-tight { gap: 20px; }
.tile { display: flex; flex-direction: column; height: 235px; padding: 27px 28px 37px; border-radius: 18px; }
.tile-icon { width: 54px; height: 54px; }
.tile-title { margin-top: auto; font-size: 30px; line-height: 36px; font-weight: 900; color: #fff; text-shadow: var(--text-shadow); }
.tile-sub { padding-left: 2px; font-size: 14px; line-height: 20px; text-shadow: var(--text-shadow); }
.tile-spot { background: linear-gradient(209deg, #8db4d3, #72d3da); }
.tile-sale { padding-bottom: 31px; background: linear-gradient(209deg, #7fc5d6, #6bd9dc 55%, #5ee8df); }
.tile-history { height: 333px; padding-bottom: 42px; border-radius: 22px; background: linear-gradient(209deg, #9fa4d1, #86bdd4 45%, #68dcdc); }
.tile-badge { padding-top: 35px; background: linear-gradient(209deg, #7fc3d6, #5ee8df 80%); }
.tile-badge .tile-icon { margin-left: 3px; }
.sale-word { font: 700 44px Roboto, sans-serif; fill: #fff; text-anchor: middle; }

/* Bottom bar */
.bottombar {
  display: flex;
  align-items: center;
  justify-content: space-between;
  height: 84px;
  padding: 0 16px 0 24px;
  color: #fff;
  background: var(--mint);
}
.bottombar a { display: flex; justify-content: center; width: 66px; }
.bottombar svg { width: 52px; height: 52px; }
.bottombar .wide { width: 66px; }

/* Map */
.map-view { position: relative; overflow: hidden; }
.map { width: 100%; height: auto; }
.road-case, .road-fill, .yellow, .blocks, .contour, .dash { fill: none; stroke-linejoin: round; }
.road-case { stroke: #d3cec8; stroke-width: 15; }
.road-fill { stroke: #fff; stroke-width: 10; }
.avenue-case { stroke-width: 25; }
.avenue-fill { stroke-width: 20; }
.yellow { stroke: #fbf8ba; stroke-width: 28; }
.blocks { stroke: #f4f1ec; stroke-width: 16; }
.contour { stroke: #e9e8dd; stroke-width: 4; }
.dash { stroke: #bdb1a6; stroke-width: 4; stroke-dasharray: 8 6; }
.exits text { font: 700 8px Roboto, sans-serif; fill: #333; text-anchor: middle; }
.labels text {
  font-size: 11px;
  font-weight: 500;
  fill: #45454b;
  text-anchor: middle;
  paint-order: stroke;
  stroke: #fff;
  stroke-width: 2px;
}
.labels .crossing { fill: #a35a60; }
.labels .water { fill: #7d8fc0; }
.labels .park { fill: #4d8653; stroke: #b9dcae; font-size: 12px; }
.labels .station { fill: #fff; stroke: #8d6c55; font-size: 10px; }
.labels .rail { fill: #8d6c55; font-size: 9px; }
.labels .zone { fill: #6f9594; font-size: 12px; }
.labels .zone-note { fill: #a9a39d; font-size: 10px; }
.pins use { color: #8d86b0; filter: drop-shadow(1px 1px 1px rgba(40, 40, 70, .3)); }
.pins .blue { color: #7598d3; }
.pins .chosen { color: #5f28ac; }
.filter-btn {
  position: absolute;
  top: 12px;
  right: 13px;
  width: 46px;
  height: 46px;
  border: 3px solid rgba(30, 30, 30, .7);
  border-radius: 10px;
  background: rgba(255, 255, 255, .6);
}
.spot {
  position: absolute;
  left: 21px;
  right: 21px;
  bottom: 18px;
  display: flex;
  justify-content: space-between;
  min-height: 188px;
  padding: 20px 25px 24px;
  border-radius: 20px;
  color: #f2eef5;
  background: rgba(118, 82, 145, .75);
}
.spot-name { font-size: 31px; line-height: 42px; font-weight: 900; white-space: nowrap; text-shadow: var(--text-shadow); }
.spot-hours { margin-top: 2px; font-size: 21px; line-height: 28px; font-weight: 300; }
.spot-address { margin-top: 22px; font-size: 18px; line-height: 21px; font-weight: 300; white-space: nowrap; }
.spot-side { display: flex; flex-direction: column; justify-content: space-between; align-items: flex-end; margin: 0 -6px 0 -60px; color: #fff; }
.spot-price { margin-right: 10px; font-size: 31px; line-height: 40px; font-weight: 900; white-space: nowrap; text-shadow: var(--text-shadow); }
.spot-unit { font-size: 22px; }

/* Filter panel */
.panel {
  position: absolute;
  top: 12px;
  right: 13px;
  width: 399px;
  min-height: 487px;
  padding: 36px 12px 52px 35px;
  border-radius: 40px 0 48px 48px;
  background: #fff;
  box-shadow: 4px 5px 8px rgba(40, 40, 40, .4);
}
.panel-title { font-size: 30px; line-height: 40px; font-weight: 900; text-shadow: 1px 2px 2px rgba(0, 0, 0, .2); }
.price-range {
  display: block;
  appearance: none;
  width: 350px;
  height: 26px;
  margin: 17px 0 0 -6px;
  background:
    radial-gradient(circle, #6b6b6b 5px, transparent 6px) 0 0 / 81px 26px repeat-x,
    linear-gradient(#7a7a7a, #7a7a7a) center / 324px 4px no-repeat;
  background-position: -28px 0, center;
}
.price-range::-webkit-slider-thumb { appearance: none; width: 26px; height: 26px; border-radius: 50%; background: #815bd6; }
.price-labels { display: grid; grid-template-columns: repeat(5, 1fr); margin: 10px -10px 0 -24px; font-size: 14px; line-height: 20px; text-align: center; }
.price-labels + .panel-title { margin-top: 27px; }
.features { display: grid; grid-template-columns: 128px 128px; gap: 11px 22px; margin-top: 15px; }
.pair { display: grid; grid-template-columns: 1fr 1fr; gap: 8px; }
.chip {
  height: 30px;
  border: 2px solid #a18abb;
  border-radius: 8px 0 8px 8px;
  font-size: 16px;
  line-height: 24px;
  font-weight: 500;
  color: #222;
  text-shadow: 1px 2px 2px rgba(0, 0, 0, .2);
}
.chip-on { color: #fff; background: #a18abb; }
.features + .panel-title { margin-top: 44px; }
.types { display: grid; grid-template-columns: repeat(4, 64px); gap: 8px; margin-top: 16px; }
.types .chip { height: 32px; }
```
